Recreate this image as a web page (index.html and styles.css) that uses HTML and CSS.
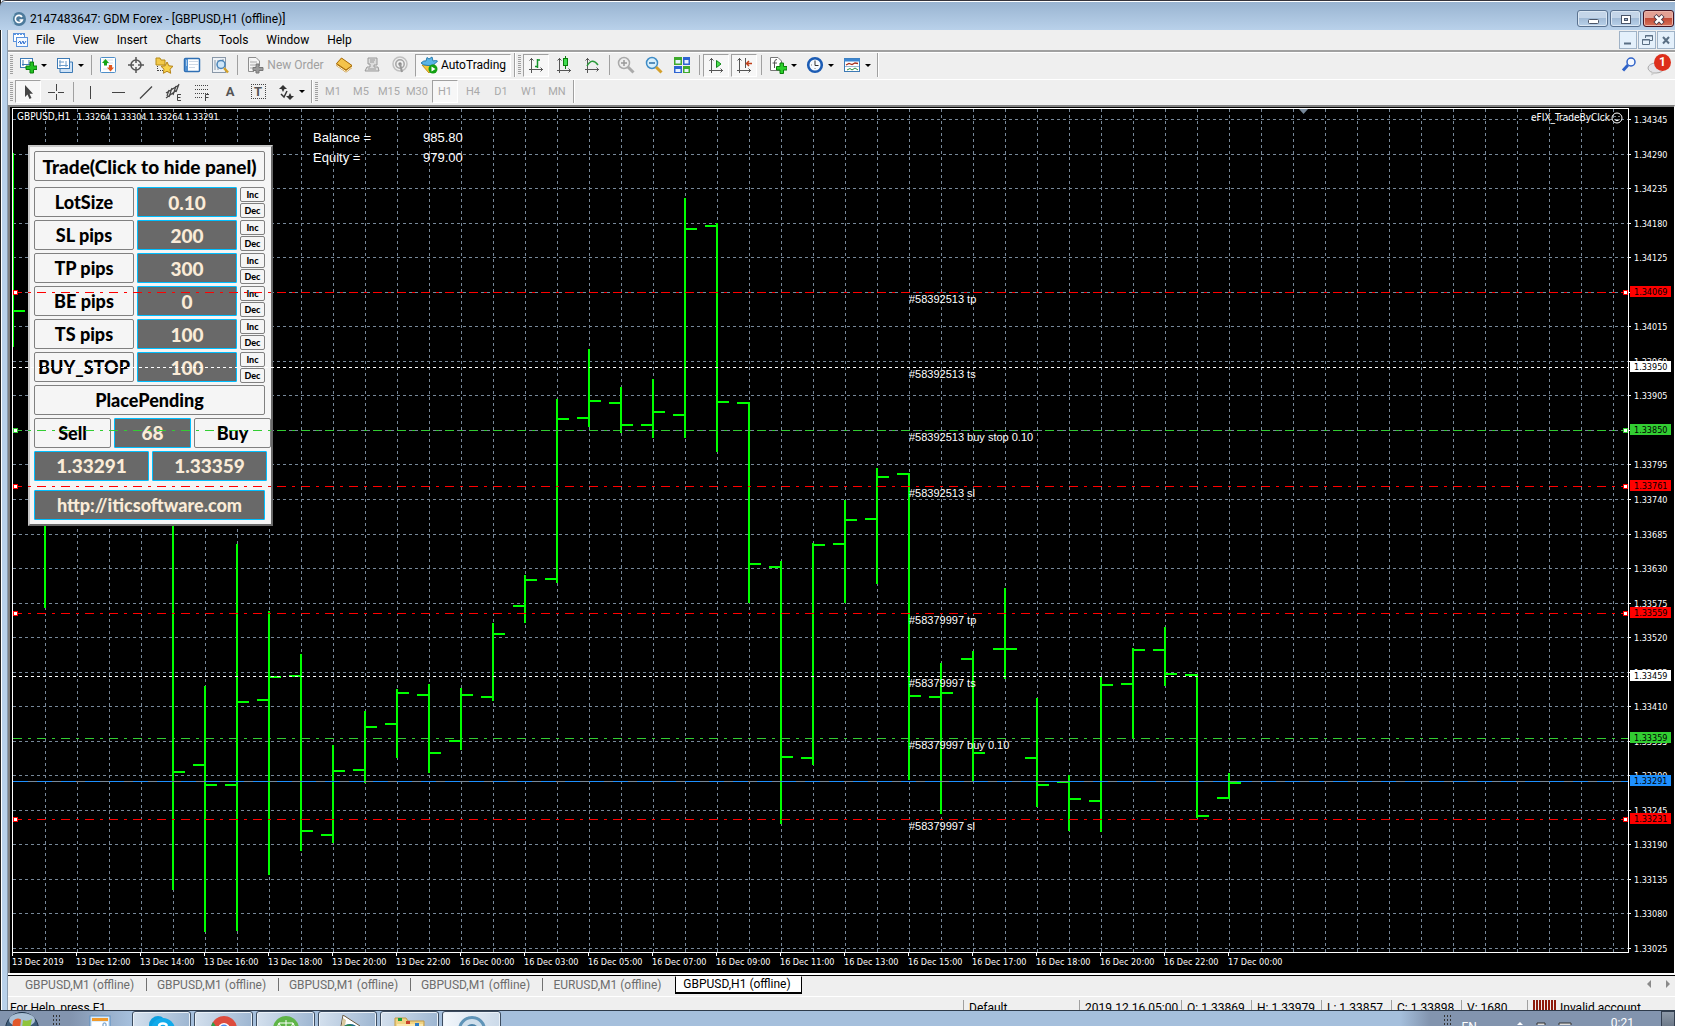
FILE: index.html
```html
<!DOCTYPE html>
<html lang="en">
<head>
<meta charset="utf-8">
<title>2147483647: GDM Forex - [GBPUSD,H1 (offline)]</title>
<link rel="stylesheet" href="styles.css">
</head>
<body>
<div class="desktop">
<main class="window">
  <header class="titlebar">
    <svg class="i16" viewBox="0 0 16 16"><circle cx="8" cy="8" r="7" fill="#4d7b9c"/><path d="M3 3A7 7 0 0 0 3 13" stroke="#9fc3da" stroke-width="2" fill="none"/><path d="M11 6A3.6 3.6 0 1 0 11.400 9H8.500" fill="none" stroke="#fff" stroke-width="1.600"/></svg>
    <h1>2147483647: GDM Forex - [GBPUSD,H1 (offline)]</h1>
    <div class="caption-buttons">
      <button class="cap" aria-label="Minimize"><svg width="30" height="16" viewBox="0 0 30 16"><rect x="10.500" y="8.500" width="10" height="4" rx="1" fill="#fff" stroke="#4a5568"/></svg></button>
      <button class="cap" aria-label="Restore"><svg width="30" height="16" viewBox="0 0 30 16"><rect x="10.500" y="4.500" width="9" height="8" fill="#fff" stroke="#4a5568"/><rect x="13.500" y="7.500" width="3" height="2" fill="#9db5d0" stroke="#4a5568"/></svg></button>
      <button class="cap cap-close" aria-label="Close"><svg width="30" height="16" viewBox="0 0 30 16"><path d="M11 4.500 19 12.500M19 4.500 11 12.500" stroke="#4a3a48" stroke-width="4.500"/><path d="M11.500 5 18.500 12M18.500 5 11.500 12" stroke="#fff" stroke-width="2.500"/></svg></button>
    </div>
  </header>

  <nav class="menubar">
    <svg class="i16" viewBox="0 0 16 16"><rect x="1.500" y="1.500" width="11" height="8" fill="#fff" stroke="#5c93dd"/><path d="M2 2.500H12" stroke="#5c93dd" stroke-dasharray="2 1"/><rect x="4.500" y="5.500" width="11" height="9" fill="#f4f9ff" stroke="#5c93dd"/><path d="M6 11 8 9 9 12 11 9 12 12 14 9" fill="none" stroke="#2f6fd0"/></svg>
    <button>File</button><button>View</button><button>Insert</button><button>Charts</button><button>Tools</button><button>Window</button><button>Help</button>
    <div class="mdi">
      <button aria-label="Minimize chart"><svg width="16" height="16" viewBox="0 0 16 16"><path d="M4 11.500H11" stroke="#5a6f84" stroke-width="2"/></svg></button>
      <button aria-label="Restore chart"><svg width="16" height="16" viewBox="0 0 16 16"><path d="M6.500 6V3.500H13.500V8.500H11M3.500 7.500H10.500V12.500H3.500ZM3 8H11M6 4H14" fill="none" stroke="#5a6f84"/></svg></button>
      <button aria-label="Close chart"><svg width="16" height="16" viewBox="0 0 16 16"><path d="M5 5 11 11.500M11 5 5 11.500" stroke="#5a6f84" stroke-width="2"/></svg></button>
    </div>
  </nav>

  <div class="toolbar toolbar-main">
    <span class="grip"></span>
    <button class="tool drop" aria-label="New chart"><svg class="i18" viewBox="0 0 18 18"><rect x="1.500" y="2.500" width="12" height="9" fill="#fff" stroke="#3d7ab5"/><path d="M4 4V10M3 8.500H12M10 4V9" stroke="#3d7ab5" fill="none"/><path d="M11 6h3.500v4H18v3.500h-3.500V17H11v-3.500H7V10h4Z" fill="#22c322" stroke="#0b7d0b"/></svg></button>
    <button class="tool drop" aria-label="Profiles"><svg class="i18" viewBox="0 0 18 18"><path d="M4 13V16.500H16.500V6H14" fill="#cfe3f7" stroke="#3d7ab5"/><rect x="1.500" y="2.500" width="12" height="10" fill="#fff" stroke="#3d7ab5"/><path d="M4 4V11M3 9.500H12M10 5V11M3 6H8" stroke="#6b9ccb" fill="none"/></svg></button>
    <span class="sep"></span>
    <button class="tool" aria-label="Market Watch"><svg class="i18" viewBox="0 0 18 18"><rect x="1.500" y="1.500" width="15" height="15" rx="1" fill="#fff" stroke="#4f8fc9"/><path d="M4 4H14M4 7H14M9 10H14M4 13H9" stroke="#d5dfea"/><path d="M6.500 3 10 7H8V9.500H5V7H3Z" fill="#14a514"/><path d="M11.500 15.500 15 11.500H13V9H10V11.500H8Z" fill="#e2571f"/></svg></button>
    <button class="tool" aria-label="Data crosshair"><svg class="i18" viewBox="0 0 18 18"><circle cx="9" cy="9" r="5" fill="none" stroke="#555" stroke-width="1.500"/><path d="M9 1V7M9 11V17M1 9H7M11 9H17" stroke="#555" stroke-width="1.500"/></svg></button>
    <button class="tool" aria-label="Navigator"><svg class="i18" viewBox="0 0 18 18"><path d="M1 2H5L6 4H10V9H1Z" fill="#f2c94b" stroke="#b58a15"/><path d="M2.500 10V15M3 14.500H8" stroke="#444" stroke-dasharray="1 1"/><path d="M12 6 13.800 9.800 18 10.300 15 13.200 15.700 17.300 12 15.300 8.300 17.300 9 13.200 6 10.300 10.200 9.800Z" fill="#f8d34b" stroke="#b58217"/></svg></button>
    <button class="tool" aria-label="Terminal"><svg class="i18" viewBox="0 0 18 18"><rect x="1.500" y="2.500" width="15" height="13" rx="1" fill="#fff" stroke="#2f6fb4" stroke-width="1.500"/><rect x="2" y="3" width="3" height="12" fill="#4f8fd0"/><path d="M3 5H4M3 7H4M3 9H4" stroke="#fff"/><path d="M6 5.500H15M6 8.500H15M6 11.500H12" stroke="#cfd9e5"/></svg></button>
    <button class="tool" aria-label="Strategy Tester"><svg class="i18" viewBox="0 0 18 18"><rect x="1.500" y="1.500" width="13" height="15" fill="#eef2f6" stroke="#8a98a8"/><path d="M4 4V14M7 4V14M12 3V7" stroke="#8a98a8"/><circle cx="10" cy="8.500" r="4" fill="#cfe6f8" stroke="#4a84b8" stroke-width="1.500"/><path d="M13 12 17 16.500" stroke="#d2a02a" stroke-width="2.500"/></svg></button>
    <span class="sep"></span>
    <button class="tool text-tool" disabled><svg class="i18" viewBox="0 0 18 18"><path d="M2.500 1.500H10L13.500 5V10M2.500 1.500V15.500H8" fill="#f6f6f6" stroke="#8e8e8e"/><path d="M4 6H11M4 9H9M4 12H8" stroke="#aaa"/><path d="M10 8h3v3.500h4v3h-4V17h-3v-2.500H7v-3h3Z" fill="#9a9a9a" stroke="#777"/></svg>New Order</button>
    <button class="tool" aria-label="MetaEditor"><svg class="i18" viewBox="0 0 18 18"><path d="M6.500 2 17 9.500V12L11 16.500 1.500 10V7.500Z" fill="#b97b12"/><path d="M6.500 2 17 9.500 11 14 1.500 7.500Z" fill="#f4c34a" stroke="#a86e10"/><path d="M2 9.500 11 15.500 17 11" stroke="#fff3cf" fill="none"/></svg></button>
    <button class="tool" aria-label="Backtest" disabled><svg class="i18" viewBox="0 0 18 18"><path d="M5 2H14V9H11V11H15L16 15H2L4 11H7V8H5Z" fill="#ddd" stroke="#999"/><path d="M7 4H12M7 6H11M5 13H13" stroke="#999"/></svg></button>
    <button class="tool" aria-label="Signals" disabled><svg class="i18" viewBox="0 0 18 18"><circle cx="9" cy="8" r="7" fill="none" stroke="#c0c0c0" stroke-width="1.500"/><circle cx="9" cy="8" r="4.200" fill="none" stroke="#a5a5a5" stroke-width="1.500"/><circle cx="9" cy="8" r="1.700" fill="#888"/><path d="M9 8 11 16" stroke="#999" stroke-width="2"/></svg></button>
    <button class="tool auto pressed"><svg class="i18" viewBox="0 0 18 18"><path d="M2 9 9 17 15 9Z" fill="#f4c637" stroke="#c4921a"/><path d="M1 7Q4 4 6 5L7 1.500 9 3 12 1 13 5Q16 4 17.500 5 14 10 8 9.500 3 9.500 1 7Z" fill="#58b4e6" stroke="#2a7cad"/><circle cx="13" cy="13" r="4.500" fill="#12a012"/><path d="M11.500 10.500 15.500 13 11.500 15.500Z" fill="#fff"/></svg>AutoTrading</button>
    <span class="edge"></span>
    <span class="grip"></span>
    <button class="tool pressed" aria-label="Bar chart"><svg class="i18" viewBox="0 0 18 18"><path d="M4.500 2V17M2 13.500H16M2.500 4.500 4.500 2.500 6.500 4.500M13.500 11.500 15.500 13.500 13.500 15.500" fill="none" stroke="#555"/><path d="M10.500 3V12M10 4H13M8 10.500H10" stroke="#14932a" stroke-width="1.500"/></svg></button>
    <button class="tool" aria-label="Candlesticks"><svg class="i18" viewBox="0 0 18 18"><path d="M4.500 2V17M2 14.500H16M2.500 4.500 4.500 2.500 6.500 4.500M13.500 12.500 15.500 14.500 13.500 16.500" fill="none" stroke="#555"/><path d="M10.500 0V13" stroke="#0b7d0b"/><rect x="8.500" y="2.500" width="4" height="7" fill="#3fdc4f" stroke="#0b7d0b"/></svg></button>
    <button class="tool" aria-label="Line chart"><svg class="i18" viewBox="0 0 18 18"><path d="M4.500 2V17M2 13.500H16M2.500 4.500 4.500 2.500 6.500 4.500M13.500 11.500 15.500 13.500 13.500 15.500" fill="none" stroke="#555"/><path d="M4 10Q9 1 15 9" fill="none" stroke="#2a9a3a" stroke-width="1.500"/></svg></button>
    <span class="sep"></span>
    <button class="tool" aria-label="Zoom in" disabled><svg class="i18" viewBox="0 0 18 18"><circle cx="7" cy="7" r="5.500" fill="#eee" stroke="#aaa" stroke-width="1.500"/><path d="M4 7H10M7 4V10" stroke="#999" stroke-width="1.500"/><path d="M11 11 16.500 16.500" stroke="#aaa" stroke-width="3"/></svg></button>
    <button class="tool" aria-label="Zoom out"><svg class="i18" viewBox="0 0 18 18"><circle cx="7" cy="7" r="5.500" fill="#d8effc" stroke="#3f8cc6" stroke-width="1.500"/><path d="M4 7H10" stroke="#2b6fa8" stroke-width="1.500"/><path d="M11 11 16.500 16.500" stroke="#d4a02c" stroke-width="3"/></svg></button>
    <button class="tool" aria-label="Tile windows"><svg class="i18" viewBox="0 0 18 18"><path d="M1 1H9V9H1ZM10 10H17V17H10Z" fill="#3eaa2c"/><path d="M10 1H17V9H10ZM1 10H9V17H1Z" fill="#2d63d2"/><path d="M2.500 4H7.500V7.500H2.500ZM11.500 4H15.500V7.500H11.500ZM2.500 13H7.500V16H2.500ZM11.500 13H15.500V16H11.500Z" fill="#e9f3ff"/></svg></button>
    <span class="sep"></span>
    <button class="tool pressed" aria-label="Auto scroll"><svg class="i18" viewBox="0 0 18 18"><path d="M4.500 2V17M2 14.500H16M2.500 4.500 4.500 2.500 6.500 4.500M13.500 12.500 15.500 14.500 13.500 16.500" fill="none" stroke="#555"/><path d="M9.500 4.500 14 8 9.500 11.500Z" fill="#4be04b" stroke="#12851c"/></svg></button>
    <button class="tool pressed" aria-label="Chart shift"><svg class="i18" viewBox="0 0 18 18"><path d="M4.500 2V17M2 14.500H16M2.500 4.500 4.500 2.500 6.500 4.500M13.500 12.500 15.500 14.500 13.500 16.500M10.500 2V12" fill="none" stroke="#555"/><path d="M17 7.500H12M14 5 11.500 7.500 14 10" fill="none" stroke="#c0401a" stroke-width="1.500"/></svg></button>
    <span class="sep"></span>
    <button class="tool drop" aria-label="Indicators"><svg class="i18" viewBox="0 0 18 18"><path d="M1.500 1.500H9L12.500 5V14.500H1.500Z" fill="#fff" stroke="#777"/><path d="M8 3.500Q6 3 5.500 6V12M3.500 7H8" stroke="#555" fill="none"/><path d="M11 7h3.500v3.500H18V14h-3.500v3.500H11V14H7.500v-3.500H11Z" fill="#2bd12b" stroke="#0b7d0b"/></svg></button>
    <button class="tool drop" aria-label="Periods"><svg class="i18" viewBox="0 0 18 18"><circle cx="9" cy="9" r="6.800" fill="#f4f9ff" stroke="#1c5cb4" stroke-width="2.600"/><path d="M9 4.500V9.500H12.500" stroke="#333" fill="none"/><path d="M5 9H6M9 13V12" stroke="#888"/></svg></button>
    <button class="tool drop" aria-label="Templates"><svg class="i18" viewBox="0 0 18 18"><rect x="1.500" y="2.500" width="15" height="13" fill="#fff" stroke="#3d7ab5"/><path d="M1 4H17" stroke="#3d86d0" stroke-width="3"/><path d="M3 9 6 7.500 9 8.500 12 7 15 7.500" stroke="#a8301c" fill="none" stroke-width="1.300"/><path d="M2 10.500H16" stroke="#9ab8d4"/><path d="M4 14 7 12.500 9 14 12 12 15 14" stroke="#2a8f3a" fill="none"/></svg></button>
    <span class="edge"></span>
    <div class="toolbar-right">
      <button aria-label="Search"><svg class="i18" viewBox="0 0 18 18"><circle cx="11" cy="6" r="4" fill="#f4f8ff" stroke="#2f62c8" stroke-width="1.500"/><path d="M8 9 3 14.500" stroke="#2f62c8" stroke-width="3"/></svg></button>
      <button class="chat" aria-label="Messages"><svg width="26" height="22" viewBox="0 0 26 22"><ellipse cx="10" cy="14" rx="8" ry="5" fill="#e4e4e8" stroke="#aaa"/><path d="M6 18 5 21.500 11 18.500Z" fill="#ccc"/></svg><span class="badge">1</span></button>
    </div>
  </div>

  <div class="toolbar toolbar-draw">
    <span class="grip"></span>
    <button class="tool pressed" aria-label="Cursor"><svg class="i18" viewBox="0 0 18 18"><path d="M6 2V14L8.500 11.500 10.500 16 12.500 15 10.500 10.800H14Z" fill="#444"/></svg></button>
    <button class="tool" aria-label="Crosshair"><svg class="i18" viewBox="0 0 18 18"><path d="M9.500 1V8M9.500 11V17M1 9.500H8M11 9.500H17" stroke="#444"/></svg></button>
    <span class="sep"></span>
    <button class="tool" aria-label="Vertical line"><svg class="i18" viewBox="0 0 18 18"><path d="M9.500 3V16" stroke="#444"/></svg></button>
    <button class="tool" aria-label="Horizontal line"><svg class="i18" viewBox="0 0 18 18"><path d="M3 9.500H16" stroke="#444"/></svg></button>
    <button class="tool" aria-label="Trendline"><svg class="i18" viewBox="0 0 18 18"><path d="M3 15.500 15 3.500" stroke="#444" stroke-width="1.200"/></svg></button>
    <button class="tool" aria-label="Equidistant channel"><svg class="i18" viewBox="0 0 18 18"><path d="M1 10 14 2M1 15 12 7M4 14 7 5M8 12 11 3M11 9 14 1M2 13 4 7" stroke="#444" stroke-width="1.200"/><path d="M16 11.500H12.500V17.500H16M12.500 14.500H15.500" fill="none" stroke="#444"/></svg></button>
    <button class="tool" aria-label="Fibonacci"><svg class="i18" viewBox="0 0 18 18"><path d="M2 2.500H16M2 6.500H16M2 10.500H16M2 14.500H10" stroke="#444" stroke-dasharray="1 1"/><path d="M12.500 18V11.500H16M12.500 14.500H15.500" fill="none" stroke="#444"/></svg></button>
    <button class="tool letter" aria-label="Text">A</button>
    <button class="tool letter" aria-label="Text label"><span class="boxed">T</span></button>
    <button class="tool drop" aria-label="Arrows"><svg class="i18" viewBox="0 0 18 18"><path d="M6 2 10 6H7.500L6 9 4.500 6H2Z" fill="#333"/><path d="M4 11 7 14 10 8" fill="none" stroke="#333" stroke-width="1.500"/><path d="M13 17 9 13H11.500L13 10 14.500 13H17Z" fill="#333"/></svg></button>
    <span class="edge"></span>
    <span class="grip"></span>
    <button class="tool period" disabled>M1</button><button class="tool period" disabled>M5</button><button class="tool period" disabled>M15</button><button class="tool period" disabled>M30</button><button class="tool period pressed" disabled>H1</button><button class="tool period" disabled>H4</button><button class="tool period" disabled>D1</button><button class="tool period" disabled>W1</button><button class="tool period" disabled>MN</button>
    <span class="edge"></span>
  </div>

  <section class="chart" aria-label="GBPUSD,H1 chart">
    <svg class="plot" id="plot"></svg>
    <form class="panel">
      <button type="button" class="key">Trade(Click to hide panel)</button>
      <div class="grid">
        <button type="button" class="key">LotSize</button><input class="val" aria-label="LotSize" value="0.10"><span class="step"><button type="button">Inc</button><button type="button">Dec</button></span>
        <button type="button" class="key">SL pips</button><input class="val" aria-label="SL pips" value="200"><span class="step"><button type="button">Inc</button><button type="button">Dec</button></span>
        <button type="button" class="key">TP pips</button><input class="val" aria-label="TP pips" value="300"><span class="step"><button type="button">Inc</button><button type="button">Dec</button></span>
        <button type="button" class="key">BE pips</button><input class="val" aria-label="BE pips" value="0"><span class="step"><button type="button">Inc</button><button type="button">Dec</button></span>
        <button type="button" class="key">TS pips</button><input class="val" aria-label="TS pips" value="100"><span class="step"><button type="button">Inc</button><button type="button">Dec</button></span>
        <button type="button" class="key">BUY_STOP</button><input class="val" aria-label="BUY_STOP" value="100"><span class="step"><button type="button">Inc</button><button type="button">Dec</button></span>
      </div>
      <button type="button" class="key">PlacePending</button>
      <div class="trade"><button type="button" class="key">Sell</button><output class="val">68</output><button type="button" class="key">Buy</button></div>
      <div class="quotes"><output class="val">1.33291</output><output class="val">1.33359</output></div>
      <a class="val link" href="http://iticsoftware.com">http://iticsoftware.com</a>
    </form>
    <svg class="plot overlay" id="overlay"></svg>
  </section>

  <nav class="tabs">
    <button>GBPUSD,M1 (offline)</button><button>GBPUSD,M1 (offline)</button><button>GBPUSD,M1 (offline)</button><button>GBPUSD,M1 (offline)</button><button>EURUSD,M1 (offline)</button><button class="active">GBPUSD,H1 (offline)</button>
    <span class="scroll"><svg width="24" height="8" viewBox="0 0 24 8"><path d="M4 0V8L0 4ZM19 0V8L23 4Z" fill="#8a8a8a"/></svg></span>
  </nav>

  <footer class="status">
    <span class="help">For Help, press F1</span>
    <span class="cell c-name">Default</span><span class="cell c-date">2019.12.16 05:00</span><span class="cell">O: 1.33869</span><span class="cell">H: 1.33979</span><span class="cell">L: 1.33857</span><span class="cell">C: 1.33898</span><span class="cell c-volume">V: 1680</span>
    <span class="cell c-account"><i class="signal"></i>Invalid account</span>
  </footer>
</main>

<footer class="taskbar">
  <button class="start" aria-label="Start"><svg width="36" height="36" viewBox="0 0 36 36"><circle cx="18" cy="18" r="16.500" fill="#3c5a78" stroke="#22364c"/><ellipse cx="18" cy="9" rx="13" ry="7" fill="#a9bfd4"/><path d="M9 10Q13 6 17 8.500L16 17Q12 15 8 18Z" fill="#e2582a"/><path d="M19 9Q23 11 28 8L26 17Q22 18 18 17Z" fill="#8fc43c"/></svg></button>
  <span class="dots"></span>
  <button class="pin" aria-label="Pinned app"><svg width="22" height="24" viewBox="0 0 22 24"><rect x="1" y="1" width="20" height="22" fill="#dcecfa" stroke="#5a8fc4"/><rect x="3" y="3" width="16" height="3" fill="#f09a2c"/><rect x="3" y="7" width="16" height="16" fill="#fff"/><rect x="14" y="8" width="3" height="6" rx="1" fill="none" stroke="#5a8fc4"/></svg></button>
  <div class="tasks">
    <button aria-label="Skype"><svg width="28" height="28" viewBox="0 0 28 28"><circle cx="10" cy="10" r="9" fill="#0b9fe0"/><circle cx="15" cy="15" r="12" fill="#12abeb"/><path d="M19 11Q18 8.500 15 8.500 11 8.500 11 11.500 11 14 15 14.500 19.500 15 19.500 18" fill="none" stroke="#fff" stroke-width="2.500"/></svg></button>
    <button aria-label="Chrome"><svg width="28" height="28" viewBox="0 0 28 28"><circle cx="14" cy="14" r="13" fill="#dd4c3e"/><path d="M3 7 10 17 14 27A13 13 0 0 1 3 7" fill="#2ba24c"/><circle cx="14" cy="14" r="6" fill="#fff"/><circle cx="14" cy="14" r="4.500" fill="#4a8af0"/></svg></button>
    <button aria-label="Broker"><svg width="28" height="28" viewBox="0 0 28 28"><circle cx="14" cy="14" r="13" fill="#5fb548"/><path d="M14 5V20M7 8H21M7 8 4 15H10ZM21 8 18 15H24Z" fill="none" stroke="#fff"/></svg></button>
    <button aria-label="Photos"><svg width="28" height="28" viewBox="0 0 28 28"><path d="M9 0 26 11 20 28H4Z" fill="#fff" stroke="#6a5a40"/><path d="M9 3 12 5 8 28H5Z" fill="#d8c89c"/><ellipse cx="16" cy="13" rx="7" ry="4" fill="#1c6a8c"/><path d="M11 11Q16 7 20 13Z" fill="#2c8a3c"/></svg></button>
    <button aria-label="Explorer"><svg width="32" height="26" viewBox="0 0 32 26"><path d="M1 3H12L14 6H30V26H1Z" fill="#f0d384" stroke="#c29a45"/><path d="M3 9H29V26H3Z" fill="#f9e7ae"/><path d="M4 3H8V6H4Z" fill="#18a03a"/><path d="M12 6H16V9H12Z" fill="#c8402a"/><path d="M21 8H25V11H21Z" fill="#2a7cc8"/></svg></button>
    <button class="current" aria-label="GDM Forex"><svg width="30" height="30" viewBox="0 0 30 30"><circle cx="15" cy="15" r="12.500" fill="#cfdfec" stroke="#5f94b8" stroke-width="3"/><circle cx="15" cy="16" r="7" fill="#4d84aa"/></svg></button>
  </div>
  <div class="tray">
    <span class="dots"></span>
    <span class="lang">EN</span>
    <svg width="66" height="14" viewBox="0 0 66 14"><path d="M8 14 11 11 14 14Z" fill="#fff"/><path d="M28 14V12H36V14" fill="#ddd" stroke="#333"/><path d="M50 14V12H62V14" fill="#ddd" stroke="#333"/></svg>
    <time>0:21</time>
    <button class="show" aria-label="Show desktop"></button>
  </div>
</footer>
</div>
<script src="chart.js"></script>
</body>
</html>
```
FILE: styles.css
```css
* { box-sizing: border-box; }
body { margin: 0; background: #fff; font-family: Roboto, "Open Sans", sans-serif; font-size: 12px; color: #000; }
button, input { font: inherit; color: inherit; margin: 0; padding: 0; border: 0; background: none; }
svg { display: block; flex: none; }

.desktop { display: flex; flex-direction: column; height: 100vh; min-height: 700px; margin-right: 9px; overflow: hidden; background: #efefef; }
.window { flex: 1; min-height: 0; display: flex; flex-direction: column; padding-left: 8px;
  background: linear-gradient(90deg, #222 0 1px, #fff 1px 2px, #b9d1ea 2px 7px, #8a9cb0 7px 8px, #efefef 8px); }
.i16 { width: 16px; height: 16px; }
.i18 { width: 18px; height: 18px; }

.titlebar { display: flex; align-items: center; gap: 3px; height: 30px; margin-left: -8px; padding: 6px 0 0 11px; border-top: 1px solid #35343c; border-radius: 6px 0 0 0;
  background: linear-gradient(#fff 0 1px, #99b4d1 1px, #b9d1ea); }
.titlebar h1 { margin: 0; font-size: 12px; font-weight: 400; line-height: 16px; flex: 1; white-space: nowrap; }
.caption-buttons { display: flex; gap: 2px; padding-right: 1px; }
.cap { width: 31px; height: 17px; border: 1px solid #5a7290; border-radius: 3px; background: linear-gradient(#c4d5e8 50%, #a2bbd6 50%, #b9d1ea); box-shadow: inset 0 0 0 1px #dbe7f3; overflow: hidden; }
.cap-close { border-color: #431422; background: linear-gradient(#e3a093 50%, #c14a36 50%, #d8735a); box-shadow: inset 0 0 0 1px #eab5aa; }

.menubar { display: flex; align-items: center; height: 22px; padding-left: 4px; border-bottom: 2px solid #a0a0a0; background: #efefef; }
.menubar > button { line-height: 18px; padding: 0 9px; }
.menubar > .i16 + button { padding-left: 8px; }
.mdi { display: flex; gap: 1px; margin-left: auto; }
.mdi button { width: 18px; height: 18px; border: 1px solid #9fb2c6; background: #e4f0fb; overflow: hidden; }

.toolbar { display: flex; align-items: center; padding-bottom: 2px; border-top: 1px solid #fff; background: #efefef; }
.toolbar-main { height: 27px; }
.toolbar-draw { height: 26px; }
.grip { width: 3px; height: 20px; margin: 0 1px 0 2px; background: repeating-linear-gradient(#a0a0a0 0 1px, #efefef 1px 2px); }
.sep { width: 1px; height: 20px; margin: 0 2px 0 3px; background: #a0a0a0; }
.edge { width: 2px; height: 100%; margin-left: 2px; border-left: 1px solid #a0a0a0; background: #fff; }
.tool { display: flex; align-items: center; justify-content: center; width: 26px; height: 23px; margin: 0 1px; border: 1px solid transparent; flex: none; white-space: nowrap; }
.tool.pressed { border-color: #a0a0a0 #fff #fff #a0a0a0; background: #f7f7f7; }
.tool.drop { width: 35px; justify-content: flex-start; padding-left: 3px; }
.tool.drop::after { content: ""; margin-left: 4px; border: 3px solid transparent; border-top-color: #000; border-bottom: 0; }
.text-tool { width: 88px; gap: 3px; color: #a0a0a0; }
.tool.auto { width: 96px; gap: 3px; }
.toolbar-right { display: flex; align-items: center; gap: 8px; margin-left: auto; padding-right: 3px; }
.chat { position: relative; width: 26px; height: 22px; }
.badge { position: absolute; right: 1px; top: 0; width: 17px; height: 17px; border-radius: 50%; background: #dd2f1b; color: #fff; font-size: 12px; line-height: 17px; font-weight: 700; text-align: center; }
.letter { font-size: 13px; font-weight: 700; color: #555; }
.boxed { width: 13px; height: 13px; line-height: 13px; outline: 1px dotted #444; text-align: center; }
.period { color: #a9a9a9; font-size: 11px; }

.chart { position: relative; flex: 1; min-height: 0; overflow: hidden; border: solid #808080; border-width: 2px 0 0 2px; border-right: 1px solid #fff; background: #000; }
.plot { position: absolute; left: 0; top: 0; width: 100%; height: 100%; }
.overlay { pointer-events: none; }
.plot text { fill: #fff; white-space: pre; }
.t-axis { font: 9px "DejaVu Sans Condensed", "DejaVu Sans", sans-serif; }
.t-name { font: 10px "DejaVu Sans Condensed", "DejaVu Sans", sans-serif; }
.t-order { font: 11px "Liberation Sans", Arial, sans-serif; }
.t-info { font: 13px "Liberation Sans", Arial, sans-serif; }
.plot .t-tag { fill: #000; }

.panel { position: absolute; left: 18px; top: 38px; width: 245px; display: flex; flex-direction: column; gap: 3px; padding: 4px; border: 2px solid; border-color: #c8c8c8 #696969 #696969 #c8c8c8; background: #f5f5f5;
  font-family: Lato, sans-serif; font-weight: 900; font-size: 18px; }
.key { height: 30px; border: 1px solid #808080; border-radius: 2px; background: #f5f5f5; white-space: nowrap; }
.val { height: 30px; min-width: 0; border: 1px solid #00bfff; border-radius: 1px; background: #696969; color: #faebd7; text-align: center; line-height: 28px; font-size: 19px; }
.panel > .key, .link { width: 231px; }
.panel > .key:first-child { margin-bottom: 3px; font-size: 19px; }
.grid { display: grid; grid-template-columns: 100px 100px 25px; grid-auto-rows: 30px; gap: 3px; }
.step { display: flex; flex-direction: column; gap: 1px; }
.step button { flex: none; height: 15px; border: 1px solid #808080; border-radius: 2px; background: #f5f5f5; font-size: 9px; line-height: 11px; }
.trade { display: flex; gap: 3px; }
.trade > * { flex: none; width: 77px; }
.quotes { display: flex; gap: 3px; }
.quotes > * { width: 115px; }
.link { margin-top: 6px; text-decoration: none; font-size: 18px; }

.tabs { display: flex; height: 23px; border-top: 2px solid #fff; box-shadow: inset 0 1px #000; padding: 1px 0 0 7px; background: #efefef; color: #6d6d6d; }
.tabs button { width: 132px; height: 18px; padding-right: 3px; line-height: 15px; white-space: nowrap; background: linear-gradient(#707070, #707070) right 2px / 1px 13px no-repeat; }
.tabs button:nth-child(5) { background: none; }
.tabs .active { width: 127px; color: #000; background: #fff; border: 1px solid #000; border-top-color: #fff; border-bottom-width: 2px; }
.scroll { margin: 4px 4px 0 auto; }

.status { display: flex; height: 14px; overflow: hidden; border-top: 1px solid #fff; line-height: 16px; padding-top: 3px; white-space: nowrap; background: #efefef; }
.help { flex: 1; padding-left: 2px; }
.cell { width: 70px; padding-left: 5px; border-left: 1px solid #a0a0a0; }
.c-name { width: 116px; }
.c-date { width: 102px; }
.c-volume { width: 66px; }
.c-account { display: flex; gap: 4px; width: 148px; }
.signal { width: 23px; height: 11px; background: repeating-linear-gradient(90deg, #8e1b0d 0 2px, #efefef 2px 3px); }

.taskbar { display: flex; height: 16px; overflow: hidden; align-items: flex-start; border-top: 1px solid #2d3a4a; background: linear-gradient(90deg, #8294ae 0 70px, #a5bfdc 130px calc(100% - 275px), #8294ae calc(100% - 245px)); }
.start { margin-left: 4px; }
.dots { width: 8px; height: 12px; margin: 3px 0 0 12px; background: radial-gradient(circle, #333 1px, transparent 1px) 0 0 / 3px 4px; }
.pin { margin: 4px 21px 0 29px; }
.tasks { display: flex; gap: 3px; }
.tasks button { display: flex; justify-content: center; width: 59px; height: 30px; padding-top: 3px; border: 1px solid #3c4c60; border-radius: 3px; background: linear-gradient(100deg, #d5e1ee, #9bb4d0); box-shadow: inset 0 0 0 1px #eaf1f8; }
.tasks .current { background: linear-gradient(100deg, #f4f8fc, #c9d8e8); }
.tray { display: flex; margin-left: auto; color: #fff; }
.lang { margin: 8px 32px 0 10px; line-height: 16px; }
.tray time { margin: 3px 27px 0 36px; line-height: 18px; }
.show { width: 14px; height: 30px; border: 1px solid #333f50; background: linear-gradient(#8d99a8, #4e5b6c); }
```
FILE: chart.js
```js
const PITCH = 32;
const GRID = '#778899';
const BAR = '#00ff00';

/* One row per bar: index, high, low, open, close. Values are heights on the price scale. */
const bars = [
  [0,46,240,null,203],[1,300,501,null,null],[5,300,783,null,664],[6,579,825,657,677],
  [7,437,824,677,594],[8,504,768,592,569],[9,547,744,568,723],[10,638,736,727,663],
  [11,604,676,662,619],[12,582,651,616,585],[13,577,666,587,645],[14,581,643,633,587],
  [15,516,594,589,526],[16,468,516,498,472],[17,292,476,471,311],[18,242,320,310,293],
  [19,280,326,295,317],[20,272,331,317,304],[21,91,331,307,121],[22,116,345,118,294],
  [23,295,496,295,456],[24,454,717,459,649],[25,436,658,650,437],[26,393,496,436,412],
  [27,361,477,411,369],[28,366,673,366,588],[29,556,707,589,585],[30,544,675,551,645],
  [31,481,572,541,541],[32,591,700,650,677],[33,668,724,674,691],[34,569,725,693,577],
  [35,541,632,576,542],[36,520,579,542,566],[37,567,711,567,708],[38,666,692,690,675]
];

const orders = [
  {y:185, price:'1.34069', color:'#ff0000', text:'#58392513 tp', dash:'9 6 3 6', mark:true},
  {y:260, price:'1.33950', color:'#ffffff', text:'#58392513 ts', dash:'3 3'},
  {y:323, price:'1.33850', color:'#32cd32', text:'#58392513 buy stop 0.10', dash:'9 6 3 6', mark:true},
  {y:379, price:'1.33761', color:'#ff0000', text:'#58392513 sl', dash:'9 6 3 6', mark:true},
  {y:506, price:'1.33559', color:'#ff0000', text:'#58379997 tp', dash:'9 6 3 6', mark:true},
  {y:569, price:'1.33459', color:'#ffffff', text:'#58379997 ts', dash:'3 3'},
  {y:631, price:'1.33359', color:'#32cd32', text:'#58379997 buy 0.10', dash:'9 6 3 6'},
  {y:674, price:'1.33291', color:'#1e90ff', text:'', dash:'15 9'},
  {y:712, price:'1.33231', color:'#ff0000', text:'#58379997 sl', dash:'9 6 3 6', mark:true}
];

const dates = ['13 Dec 2019','13 Dec 12:00','13 Dec 14:00','13 Dec 16:00','13 Dec 18:00','13 Dec 20:00','13 Dec 22:00',
  '16 Dec 00:00','16 Dec 03:00','16 Dec 05:00','16 Dec 07:00','16 Dec 09:00','16 Dec 11:00','16 Dec 13:00','16 Dec 15:00',
  '16 Dec 17:00','16 Dec 18:00','16 Dec 20:00','16 Dec 22:00','17 Dec 00:00'];

const rect = (x, y, w, h, fill) => `<rect x="${x}" y="${y}" width="${w}" height="${h}" fill="${fill}"/>`;
const line = (x1, y1, x2, y2, color, dash) =>
  `<path d="M${x1} ${y1}L${x2} ${y2}" stroke="${color}" stroke-dasharray="${dash || 'none'}"/>`;
const text = (x, y, cls, s) => `<text x="${x}" y="${y}" class="${cls}">${s}</text>`;

function draw() {
  const plot = document.getElementById('plot');
  const overlay = document.getElementById('overlay');
  const right = plot.clientWidth - 46;
  const bottom = plot.clientHeight - 21;
  let out = '';
  let top = '';

  for (let x = 35.5; x < right; x += PITCH) out += line(x, 2, x, bottom, GRID, '3 3');
  for (let i = 0; i < 25; i++) {
    const y = 12 + Math.round(i * 829 / 24);
    out += line(3, y + .5, right, y + .5, GRID, '3 3');
    out += rect(right, y, 3, 1, '#fff');
    out += text(right + 6, y + 4, 't-axis', (1.34345 - i * .00055).toFixed(5));
  }
  for (const [k, high, low, open, close] of bars) {
    const x = 2 + k * PITCH;
    out += rect(x, high, 2, low - high, BAR);
    if (open !== null) out += rect(x - 11, open, 12, 2, BAR);
    if (close !== null) out += rect(x, close, 13, 2, BAR);
  }
  out += rect(2, 1, right - 1, 1, '#fff') + rect(2, 1, 1, bottom, '#fff');
  out += rect(2, bottom, right - 1, 1, '#fff') + rect(right, 1, 1, bottom, '#fff');
  dates.forEach((d, i) => {
    out += rect(2 + i * 64, bottom, 1, 4, '#fff') + text(2 + i * 64, bottom + 13, 't-axis', d);
  });
  out += `<path d="M${right - 329} 2h9l-4.500 5z" fill="${GRID}"/>`;
  out += text(7, 13, 't-name', 'GBPUSD,H1') + text(67, 13, 't-axis', '1.33264 1.33304 1.33264 1.33291');
  out += `<text x="${right - 18}" y="14" class="t-name" text-anchor="end">eFIX_TradeByClck</text>`;
  out += `<g transform="translate(${right - 11} 11)" fill="none" stroke="#fff"><circle r="5"/><path d="M-2.500 1.500Q0 4 2.500 1.500M-2-2V-1M2-2V-1"/></g>`;
  out += text(303, 35, 't-info', 'Balance =') + text(413, 35, 't-info', '985.80');
  out += text(303, 55, 't-info', 'Equity =') + text(413, 55, 't-info', '979.00');

  for (const o of orders) {
    if (o.color === '#1e90ff') top += line(3, o.y + .5, right, o.y + .5, GRID);
    top += line(3, o.y + .5, right, o.y + .5, o.color, o.dash);
    if (o.mark) for (const x of [3, right - 5]) top += rect(x, o.y - 2, 5, 5, o.color) + rect(x + 1, o.y - 1, 3, 3, '#fff');
    top += rect(right + 2, o.y - 6, 41, 11, o.color) + text(right + 6, o.y + 3, 't-axis t-tag', o.price);
    if (o.text) top += text(899, o.y + 11, 't-order', o.text);
  }
  plot.innerHTML = out;
  overlay.innerHTML = top;
}
draw();
addEventListener('resize', draw);
```
